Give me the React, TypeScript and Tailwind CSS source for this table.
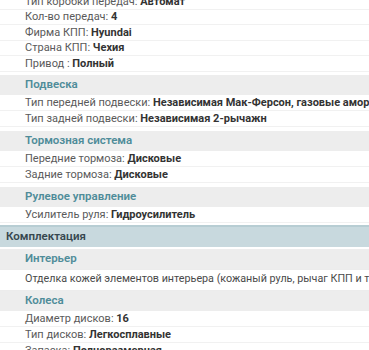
type Spec = [string, string];

type Group = {
  title: string;
  rows?: Spec[];
  note?: string;
};

const transmission: Spec[] = [
  ["Тип коробки передач", "Автомат"],
  ["Кол-во передач", "4"],
  ["Фирма КПП", "Hyundai"],
  ["Страна КПП", "Чехия"],
  ["Привод ", "Полный"],
];

const chassis: Group[] = [
  {
    title: "Подвеска",
    rows: [
      ["Тип передней подвески", "Независимая Мак-Ферсон, газовые амортизаторы"],
      ["Тип задней подвески", "Независимая 2-рычажн"],
    ],
  },
  {
    title: "Тормозная система",
    rows: [
      ["Передние тормоза", "Дисковые"],
      ["Задние тормоза", "Дисковые"],
    ],
  },
  {
    title: "Рулевое управление",
    rows: [["Усилитель руля", "Гидроусилитель"]],
  },
];

const equipment: Group[] = [
  {
    title: "Интерьер",
    note: "Отделка кожей элементов интерьера (кожаный руль, рычаг КПП и т.д.)",
  },
  {
    title: "Колеса",
    rows: [
      ["Диаметр дисков", "16"],
      ["Тип дисков", "Легкосплавные"],
      ["Запаска", "Полноразмерная"],
    ],
  },
];

function Row({ spec, tight }: { spec: Spec; tight?: boolean }) {
  const [label, value] = spec;
  return (
    <div
      className={`flex items-center whitespace-nowrap border-b border-[#f1f1f1] pl-[25px] text-[11px] leading-none ${
        tight ? "h-[15.5px]" : "h-[16px]"
      }`}
    >
      <span className="text-[#5a5a5a]">{label}:&nbsp;</span>
      <span className="font-bold text-[#333]">{value}</span>
    </div>
  );
}

function GroupBlock({ group, gap }: { group: Group; gap: string }) {
  return (
    <div className={gap}>
      <div className="flex h-[20px] items-center bg-[#ededed] pl-[25px] text-[11.5px] font-semibold text-[#4f8c99]">
        {group.title}
      </div>
      {group.rows?.map((r) => (
        <Row key={r[0]} spec={r} />
      ))}
      {group.note && (
        <div className="flex h-[22px] items-center whitespace-nowrap border-y border-[#ececec] pl-[25px] text-[10.75px] text-[#4a4a4a]">
          {group.note}
        </div>
      )}
    </div>
  );
}

export default function App() {
  return (
    <div className="h-[350px] w-[369px] overflow-hidden bg-white font-['Roboto',sans-serif]">
      <div className="-mt-[6px]">
        {transmission.map((r) => (
          <Row key={r[0]} spec={r} tight />
        ))}
        <div className="mt-[3px]">
          {chassis.map((g, i) => (
            <GroupBlock key={g.title} group={g} gap={i === 0 ? "" : "mt-[4px]"} />
          ))}
        </div>
        <div className="mt-[2px] flex h-[22px] items-center border-t-2 border-[#b7cdd3] bg-[#c8d9de] pl-[6px] text-[11.5px] font-semibold text-[#37474f]">
          Комплектация
        </div>
        {equipment.map((g, i) => (
          <GroupBlock key={g.title} group={g} gap={i === 0 ? "mt-[2px]" : ""} />
        ))}
      </div>
    </div>
  );
}
